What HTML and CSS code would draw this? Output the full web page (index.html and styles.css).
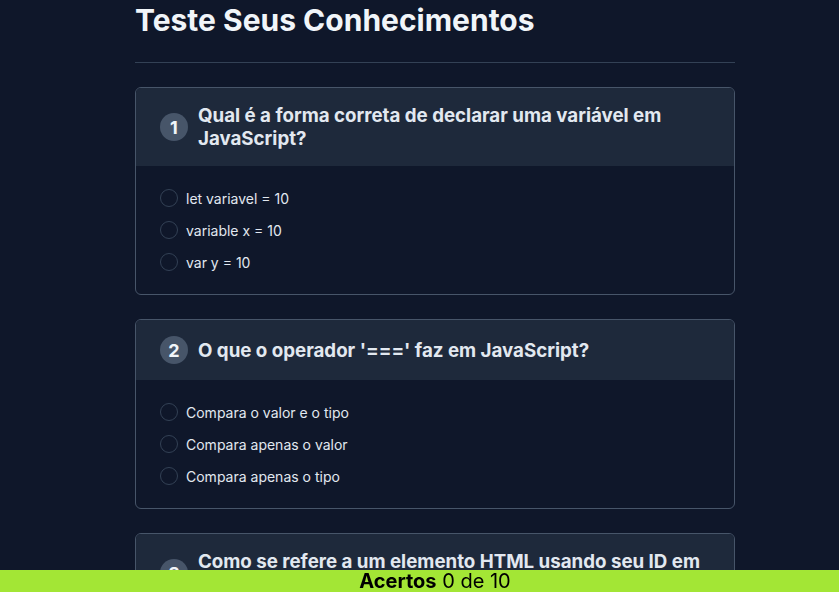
FILE: index.html
```html
<!DOCTYPE html>
<html lang="pt-BR">
<head>
<meta charset="utf-8">
<title>Quiz</title>
<link rel="stylesheet" href="styles.css">
</head>
<body>
<main class="page">
  <div class="container">
    <h1 class="title">Teste Seus Conhecimentos</h1>
    <hr class="divider">
    <section class="card">
      <div class="card-header">
        <span class="badge">1</span>
        <h3 class="question">Qual é a forma correta de declarar uma variável em JavaScript?</h3>
      </div>
      <div class="card-body">
        <label class="option"><span class="radio"></span>let variavel = 10</label>
        <label class="option"><span class="radio"></span>variable x = 10</label>
        <label class="option"><span class="radio"></span>var y = 10</label>
      </div>
    </section>
    <section class="card">
      <div class="card-header">
        <span class="badge">2</span>
        <h3 class="question">O que o operador '===' faz em JavaScript?</h3>
      </div>
      <div class="card-body">
        <label class="option"><span class="radio"></span>Compara o valor e o tipo</label>
        <label class="option"><span class="radio"></span>Compara apenas o valor</label>
        <label class="option"><span class="radio"></span>Compara apenas o tipo</label>
      </div>
    </section>
    <section class="card">
      <div class="card-header">
        <span class="badge">3</span>
        <h3 class="question">Como se refere a um elemento HTML usando seu ID em JavaScript?</h3>
      </div>
      <div class="card-body">
        <label class="option"><span class="radio"></span>document.getElementById()</label>
        <label class="option"><span class="radio"></span>document.querySelector()</label>
        <label class="option"><span class="radio"></span>document.getElement()</label>
      </div>
    </section>
  </div>
</main>
<footer class="score">
  <span class="score-inner"><strong>Acertos</strong> 0 de 10</span>
</footer>
</body>
</html>
```

FILE: styles.css
```css
* { box-sizing: border-box; }
html, body {
  margin: 0;
  padding: 0;
  background: #0f172a;
  overflow: hidden;
}
body {
  font-family: Inter, "Noto Sans", sans-serif;
  color: #e2e8f0;
}
.page {
  display: flex;
  justify-content: center;
  padding-left: 31px;
}
.container {
  width: 600px;
}
.title {
  margin: 0;
  padding-top: 2px;
  font-size: 30px;
  line-height: 36px;
  font-weight: 700;
  color: #f1f5f9;
}
.divider {
  border: 0;
  border-top: 1px solid #334155;
  margin: 24px 0 24px;
}
.card {
  border: 1px solid #475569;
  border-radius: 6px;
  overflow: hidden;
  margin-bottom: 24px;
}
.card-header {
  background: #1e293b;
  display: flex;
  align-items: center;
  gap: 10px;
  padding: 16px 24px;
}
.badge {
  flex: none;
  width: 28px;
  height: 28px;
  border-radius: 50%;
  background: #475569;
  color: #f1f5f9;
  font-weight: 700;
  font-size: 18px;
  display: flex;
  align-items: center;
  justify-content: center;
}
.question {
  margin: 0;
  font-size: 18.72px;
  line-height: 23px;
  font-weight: 700;
  color: #e2e8f0;
}
.card-body {
  display: flex;
  flex-direction: column;
  gap: 8px;
  padding: 20px 24px;
}
.option {
  display: flex;
  align-items: center;
  gap: 8px;
  height: 24px;
  font-size: 14px;
  color: #e2e8f0;
}
.radio {
  width: 18px;
  height: 18px;
  border: 1px solid #334155;
  border-radius: 50%;
}
.score {
  position: fixed;
  left: 0;
  right: 0;
  bottom: 0;
  height: 22px;
  background: #a3e635;
  color: #000;
  display: flex;
  justify-content: center;
  align-items: center;
  padding-left: 31px;
  font-size: 20px;
  line-height: 22px;
}
.score strong { font-weight: 700; }
```
